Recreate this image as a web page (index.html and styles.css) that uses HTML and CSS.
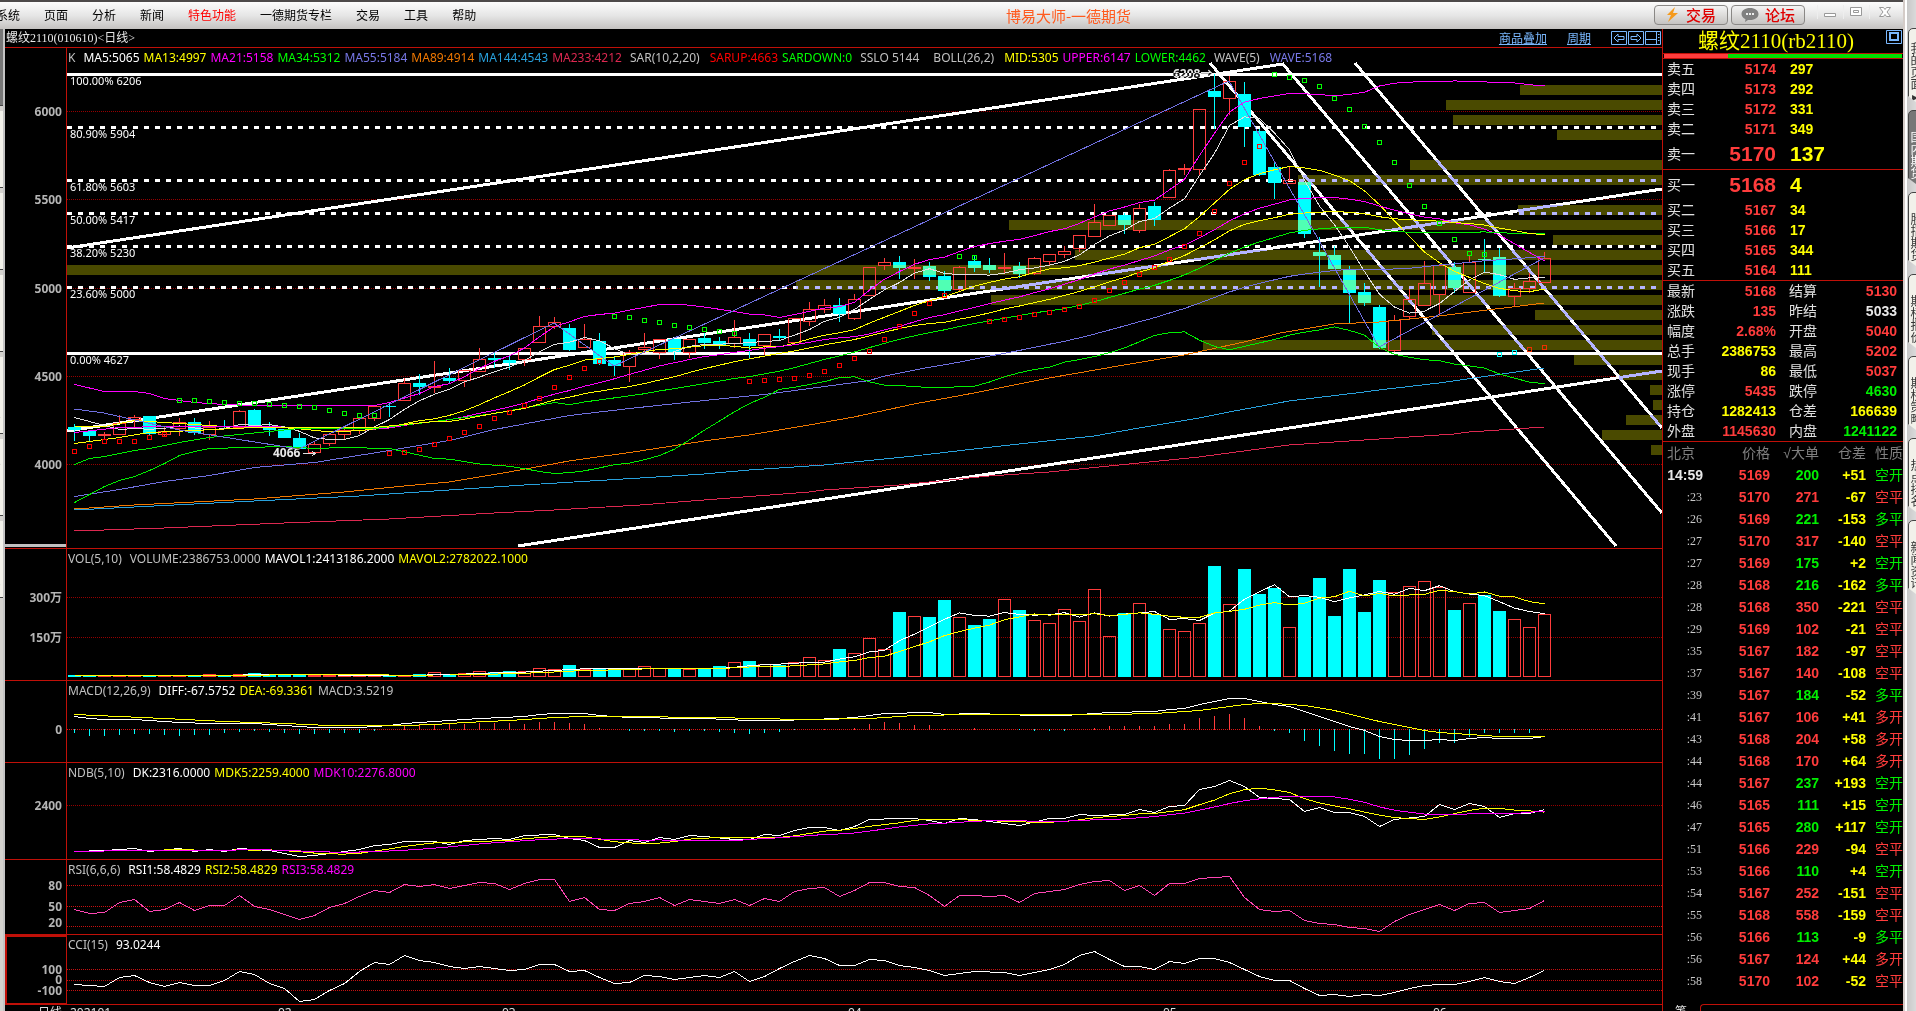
FILE: index.html
```html
<!DOCTYPE html>
<html lang="zh-CN">
<head>
<meta charset="utf-8">
<title>博易大师-一德期货</title>
<link rel="stylesheet" href="styles.css">
</head>
<body>
<div class="app">
  <header class="menubar">
    <nav class="menu">
      <a href="#">系统</a><a href="#">页面</a><a href="#">分析</a><a href="#">新闻</a><a href="#" class="hot">特色功能</a><a href="#">一德期货专栏</a><a href="#">交易</a><a href="#">工具</a><a href="#">帮助</a>
    </nav>
    <h1 class="app-title">博易大师-一德期货</h1>
    <div class="actions">
      <button class="action" type="button">
        <svg width="14" height="15" viewBox="0 0 14 15"><path d="M9 0 1 8h4l-3 7 10-9H7z" fill="#f59a1c"/></svg>交易
      </button>
      <button class="action" type="button">
        <svg width="18" height="14" viewBox="0 0 18 14"><path d="M9 0c5 0 8.500 2.500 8.500 6S14 12 9 12l-2 0-3 2 .5-2.800C2 10 .5 8.200.5 6 .5 2.500 4 0 9 0z" fill="#808080"/><path d="M5 5h2v2H5zM8 5h2v2H8zM11 5h2v2h-2z" fill="#eee"/></svg>论坛
      </button>
      <div class="win">
        <button type="button" aria-label="最小化"><svg width="13" height="12" viewBox="0 0 13 12"><path d="M.5 7.500h11v3H.5z" fill="#fff" stroke="#999"/></svg></button>
        <button type="button" aria-label="还原"><svg width="13" height="12" viewBox="0 0 13 12"><path d="M.5 1.500h11v8H.5zM3.500 4.500h5v2h-5z" fill="#fff" stroke="#999"/></svg></button>
        <button type="button" aria-label="关闭"><svg width="13" height="12" viewBox="0 0 13 12"><path d="M.5 1.500h4L6 3.500l1.500-2h4L8 6l3.500 4.500h-4L6 8.500l-1.500 2h-4L4 6z" fill="#fff" stroke="#999"/></svg></button>
      </div>
    </div>
  </header>

  <div class="body">
    <aside class="tabs left" id="leftTabs" aria-label="左侧标签"></aside>

    <main class="charts">
      <div class="chart-head">
        <h2>螺纹2110(010610)&lt;日线&gt;</h2>
        <div class="tools">
          <a href="#">商品叠加</a><a href="#">周期</a>
          <svg class="icons" width="50" height="14" viewBox="0 0 50 14" fill="none" stroke="#7ab8ff">
            <path d="M.5.500h15v13H.5zM17.500.500h15v13h-15zM34.500.500h15v13h-15z"/>
            <path d="M3 7l4-4v2.500h6v3H7V11zM30 7l-4-4v2.500h-6v3h6V11z"/>
            <path d="M34.500 8.500h11M45.500.500v13M47 3.500h1.500M47 6.500h1.500M47 9.500h1.500"/>
          </svg>
        </div>
      </div>

      <section class="pane price">
        <div class="axis" data-ticks="6000 111,5500 199,5000 288,4500 376,4000 464" data-top="48" data-height="500"></div>
        <div class="plot">
          <svg id="price" viewBox="67 48 1595 500" preserveAspectRatio="none"></svg>
          <div class="fibs" id="fibs"></div>
          <p class="legend">
            <span>K</span><span class="white gap">MA5:5065</span><span class="yellow">MA13:4997</span><span class="magenta">MA21:5158</span><span class="green">MA34:5312</span><span class="indigo">MA55:5184</span><span class="orange">MA89:4914</span><span class="sky">MA144:4543</span><span class="rose">MA233:4212</span><span class="gap fn">SAR(10,2,20)</span><span class="pure-red">SARUP:4663</span><span class="green">SARDOWN:0</span><span class="gap fn">SSLO 5144</span><span class="gap fn">BOLL(26,2)</span><span class="yellow">MID:5305</span><span class="magenta">UPPER:6147</span><span class="green">LOWER:4462</span><span class="gap fn">WAVE(5)</span><span class="indigo">WAVE:5168</span>
          </p>
        </div>
      </section>

      <section class="pane volume">
        <div class="axis" data-ticks="300万 597,150万 637" data-top="549" data-height="131"></div>
        <div class="plot">
          <svg id="volume" viewBox="67 549 1595 131" preserveAspectRatio="none"></svg>
          <p class="legend"><span class="fn">VOL(5,10)</span><span>VOLUME:2386753.0000</span><span class="white">MAVOL1:2413186.2000</span><span class="yellow">MAVOL2:2782022.1000</span></p>
        </div>
      </section>

      <section class="pane macd">
        <div class="axis" data-ticks="0 729" data-top="681" data-height="81"></div>
        <div class="plot">
          <svg id="macd" viewBox="67 681 1595 81" preserveAspectRatio="none"></svg>
          <p class="legend"><span class="fn">MACD(12,26,9)</span><span class="white">DIFF:-67.5752</span><span class="yellow">DEA:-69.3361</span><span>MACD:3.5219</span></p>
        </div>
      </section>

      <section class="pane ndb">
        <div class="axis" data-ticks="2400 805" data-top="763" data-height="96"></div>
        <div class="plot">
          <svg id="ndb" viewBox="67 763 1595 96" preserveAspectRatio="none"></svg>
          <p class="legend"><span class="fn">NDB(5,10)</span><span class="white">DK:2316.0000</span><span class="yellow">MDK5:2259.4000</span><span class="magenta">MDK10:2276.8000</span></p>
        </div>
      </section>

      <section class="pane rsi">
        <div class="axis" data-ticks="80 885,50 906,20 922" data-top="860" data-height="74"></div>
        <div class="plot">
          <svg id="rsi" viewBox="67 860 1595 74" preserveAspectRatio="none"></svg>
          <p class="legend"><span class="fn">RSI(6,6,6)</span><span class="white">RSI1:58.4829</span><span class="yellow">RSI2:58.4829</span><span class="magenta">RSI3:58.4829</span></p>
        </div>
      </section>

      <section class="pane cci">
        <div class="axis selected" data-ticks="100 968,0 979,-100 990" data-top="935" data-height="69"></div>
        <div class="plot">
          <svg id="cci" viewBox="67 935 1595 69" preserveAspectRatio="none"></svg>
          <p class="legend"><span class="fn">CCI(15)</span><span class="white">93.0244</span></p>
        </div>
      </section>

      <footer class="timeline">
        <span class="period">日线</span>
        <div class="dates" id="dates"></div>
      </footer>
    </main>

    <aside class="quote">
      <div class="quote-head">
        <h2>螺纹2110(rb2110)</h2>
        <button type="button" aria-label="最大化"><svg width="16" height="14" viewBox="0 0 16 14" fill="none" stroke="#7ab8ff"><path d="M.5.500h15v13H.5z"/><path d="M4 3h8v7H4z" stroke-width="2"/></svg></button>
      </div>
      <div class="ratio"><span class="buy"></span></div>

      <table class="book">
        <tr><th>卖五</th><td>5174</td><td class="yellow">297</td></tr>
        <tr><th>卖四</th><td>5173</td><td class="yellow">292</td></tr>
        <tr><th>卖三</th><td>5172</td><td class="yellow">331</td></tr>
        <tr><th>卖二</th><td>5171</td><td class="yellow">349</td></tr>
        <tr class="best"><th>卖一</th><td>5170</td><td class="yellow">137</td></tr>
      </table>
      <table class="book">
        <tr class="best"><th>买一</th><td>5168</td><td class="yellow">4</td></tr>
        <tr><th>买二</th><td>5167</td><td class="yellow">34</td></tr>
        <tr><th>买三</th><td>5166</td><td class="yellow">17</td></tr>
        <tr><th>买四</th><td>5165</td><td class="yellow">344</td></tr>
        <tr><th>买五</th><td>5164</td><td class="yellow">111</td></tr>
      </table>
      <table class="stats">
        <tr><th>最新</th><td class="red">5168</td><th>结算</th><td class="red">5130</td></tr>
        <tr><th>涨跌</th><td class="red">135</td><th>昨结</th><td class="pale">5033</td></tr>
        <tr><th>幅度</th><td class="red">2.68%</td><th>开盘</th><td class="red">5040</td></tr>
        <tr><th>总手</th><td class="yellow">2386753</td><th>最高</th><td class="red">5202</td></tr>
        <tr><th>现手</th><td class="yellow">86</td><th>最低</th><td class="red">5037</td></tr>
        <tr><th>涨停</th><td class="red">5435</td><th>跌停</th><td class="lime">4630</td></tr>
        <tr><th>持仓</th><td class="yellow">1282413</td><th>仓差</th><td class="yellow">166639</td></tr>
        <tr><th>外盘</th><td class="red">1145630</td><th>内盘</th><td class="lime">1241122</td></tr>
      </table>
      <table class="trades">
        <thead><tr><th>北京</th><th>价格</th><th>√大单</th><th>仓差</th><th>性质</th></tr></thead>
        <tbody id="trades"></tbody>
      </table>
      <div class="quote-tabs"><span>笔</span><div class="quote-tab"></div></div>
    </aside>
  </div>
</div>
<aside class="edge">
  <div class="tabs right" id="rightTabs" aria-label="右侧标签"></div>
</aside>
<script src="chart.js"></script>
</body>
</html>
```
FILE: styles.css
```css
* { box-sizing: border-box; }

body {
  margin: 0;
  height: 100vh;
  display: flex;
  overflow: hidden;
  background: #000;
  color: #c0c0c0;
  font: 12px/20px "Noto Sans", "Noto Sans CJK SC", sans-serif;
}

h1, h2, p { margin: 0; font-weight: 400; }
button { padding: 0; border: 0; background: none; font: inherit; }
svg { display: block; }

.app { flex: 1; min-width: 0; display: flex; flex-direction: column; }

/* menu bar */
.menubar {
  position: relative;
  flex: none;
  height: 29px;
  display: flex;
  justify-content: space-between;
  align-items: center;
  border-top: 2px solid #4d4a4a;
  background: linear-gradient(#fcfcfc, #e6e6e6 50%, #c4c2c0);
}
.menu { display: flex; gap: 24px; margin-left: -4px; padding-bottom: 2px; }
.menu a { color: #000; text-decoration: none; white-space: nowrap; font-family: "Noto Sans CJK SC", sans-serif; }
.menu a.hot { color: #f00; }
.app-title {
  position: absolute;
  left: 0;
  right: 0;
  padding-left: 234px;
  text-align: center;
  pointer-events: none;
  color: #ff5a1e;
  font: 15px/24px "Noto Sans CJK SC", sans-serif;
}
.actions { display: flex; align-items: center; gap: 3px; padding: 0 3px 2px 0; }
.action {
  width: 74px;
  height: 20px;
  display: flex;
  align-items: center;
  justify-content: center;
  gap: 6px;
  border: 1px solid #8a8886;
  border-radius: 4px;
  background: linear-gradient(#f4f4f4, #c6c4c2);
  color: #e00000;
  font: 500 15px/18px "Noto Sans CJK SC", sans-serif;
}
.win { display: flex; align-self: flex-start; height: 18px; padding-left: 9px; }
.win button { width: 26px; height: 14px; display: flex; align-items: center; justify-content: center; border-left: 1px solid #eee; }
.win button:last-child { width: 31px; }

/* workspace */
.body { flex: 1; min-height: 0; display: flex; }

.tabs { display: flex; flex-direction: column; gap: 5px; overflow: hidden; font: 12px/13px "Noto Sans CJK SC", sans-serif; }
.tab {
  flex: none;
  height: 77px;
  border: 1px solid #444;
  color: #333;
  background: #f2f1ea;
  writing-mode: vertical-rl;
}
.tab.active { background: #777; color: #fff; }
.tabs.left { flex: none; width: 5px; background: #d4d2ce; border-right: 2px solid #c4c4c4; align-items: flex-end; }
.tabs.left .tab { width: 17px; padding-top: 8px; border: 0; border-bottom: 1px solid #444; }
.tabs.left .tab.active { background: #777; }

.edge {
  flex: none;
  width: 13px;
  display: flex;
  flex-direction: column;
  padding-top: 28px;
  overflow: hidden;
  border-left: 2px solid #d4ccc8;
  background: linear-gradient(90deg, #fff 2px, #c8c8c8 2px, #dadada);
}
.tabs.right { padding-left: 3px; }
.tabs.right .tab { width: 18px; padding: 12px 2px 0; border-radius: 5px 0 0 0; clip-path: polygon(0 0, 100% 0, 100% 100%, 12px 100%, 0 68px); }

/* charts */
.charts { flex: 1; min-width: 0; display: flex; flex-direction: column; }
.chart-head {
  flex: none;
  height: 19px;
  display: flex;
  align-items: center;
  justify-content: space-between;
  padding: 0 1px;
  border-bottom: 1px solid #c01008;
}
.chart-head h2 { color: #e8e8e8; font: 12px/18px "Liberation Serif", "Noto Sans CJK SC", serif; }
.tools { display: flex; align-items: center; gap: 20px; }
.tools a { color: #7ab8ff; font: 12px/18px "Noto Sans CJK SC", sans-serif; }

.pane { min-height: 0; display: flex; border-bottom: 1px solid #c01008; }
.price { flex: 500 1 0; }
.volume { flex: 131 1 0; }
.macd { flex: 81 1 0; }
.ndb { flex: 96 1 0; }
.rsi { flex: 74 1 0; }
.cci { flex: 69 1 0; }

.axis { position: relative; flex: none; width: 62px; border-right: 1px solid #c01008; }
.axis span { position: absolute; right: 4px; margin-top: -5px; color: #b4b4b4; font-weight: 700; line-height: 11px; }
.price .axis::after { content: ""; position: absolute; left: 0; right: 0; bottom: 1px; height: 3px; background: #c0c0c0; }
.axis.selected { border: 2px solid #c01008; border-width: 2px 1px 1px 2px; }

.plot { position: relative; flex: 1; min-width: 0; }
.plot > svg { position: absolute; inset: 0; width: 100%; height: 100%; shape-rendering: crispEdges; }
.legend { position: absolute; top: 0; left: 1px; display: flex; gap: 4px; white-space: nowrap; }
.legend .gap { margin-left: 4px; }
.legend .fn { padding-right: 4px; }
.price .legend .fn { padding-right: 6px; }
.fibs span { position: absolute; left: 3px; margin-top: -3px; color: #fff; font-size: 11px; white-space: nowrap; }
.fibs .extreme { left: auto; margin-top: -10px; font-size: 12px; font-weight: 700; color: #e8e8e8; mix-blend-mode: difference; }

.blend { mix-blend-mode: difference; }

.timeline { flex: 0 0 6px; display: flex; overflow: hidden; color: #e0e0e0; line-height: 16px; }
.period { flex: none; width: 62px; padding-right: 5px; text-align: right; }
.dates { position: relative; flex: 1; }
.dates span { position: absolute; top: 0; }

/* quote panel */
.quote {
  flex: none;
  width: 241px;
  display: flex;
  flex-direction: column;
  overflow: hidden;
  border-left: 1px solid #c01008;
  font: 14px/20px "Liberation Sans", "Noto Sans CJK SC", sans-serif;
}
.quote-head { position: relative; flex: none; height: 24px; display: flex; align-items: center; justify-content: center; }
.quote-head h2 { padding-right: 14px; color: #ff0; font: 21px/24px "Liberation Serif", "Noto Sans CJK SC", serif; }
.quote-head button { position: absolute; right: 1px; top: 1px; }
.ratio { flex: none; height: 6px; padding: 0 1px; border: solid #c01008; border-width: 1px 0; background: #00e000 content-box; }
.ratio .buy { display: block; width: 27%; height: 100%; background: #ff3c3c; }

.quote table { flex: none; width: 100%; table-layout: fixed; border-collapse: separate; border-spacing: 0; }
.quote th, .quote td { height: 20px; padding: 0; line-height: 18px; white-space: nowrap; }
.quote th { color: #e0e0e0; font-weight: 400; text-align: left; }
.quote td { font-weight: 700; text-align: right; }

.book, .stats { border-bottom: 1px solid #c01008; }
.quote .book th, .quote .stats th:first-child { width: 36px; padding-left: 4px; }
.book td:nth-child(2) { width: 77px; color: #ff3c3c; }
.quote .book td:last-child { padding-left: 14px; text-align: left; }
.quote .best th, .quote .best td { height: 30px; }
.book .best td { font-size: 21px; }
.stats td:nth-child(2) { width: 77px; }
.quote .stats th:nth-child(3) { width: 50px; padding-left: 13px; }
.quote .stats td:last-child { padding-right: 6px; }

.quote .trades th:nth-child(1) { width: 40px; padding-left: 4px; text-align: left; }
.trades th:nth-child(2) { width: 67px; }
.trades th:nth-child(3) { width: 49px; }
.trades th:nth-child(4) { width: 47px; }
.quote .trades th, .quote .trades td { height: 22px; }
.quote .trades th { color: #808080; text-align: right; }
.quote .trades .sec { padding-right: 1px; color: #c8c8c8; font: 12px/18px "Liberation Serif", serif; }
.quote .trades .kind { font-weight: 400; }

.quote-tabs { display: flex; flex: none; height: 19px; margin-top: 12px; color: #e0e0e0; font-size: 12px; line-height: 16px; }
.quote-tabs span { width: 37px; padding-left: 12px; }
.quote-tab { flex: 1; border: 1px solid #c01008; border-width: 1px 0 0 1px; border-radius: 4px 0 0 0; }

/* shared colours */
.white { color: #fff; }
.pale { color: #e8e8e8; }
.yellow { color: #ff0; }
.magenta { color: #f0f; }
.green { color: #0f0; }
.lime { color: #00f000; }
.indigo { color: #7878e8; }
.orange { color: #f07800; }
.sky { color: #28a0dc; }
.rose { color: #dc2850; }
.red { color: #ff3c3c; }
.pure-red { color: #f00; }
```
FILE: chart.js
```js
const SVG = 'http://www.w3.org/2000/svg';
const X0 = 74, STEP = 15, COUNT = 99, LEFT = 67, RIGHT = 1662;
const xAt = i => X0 + STEP * i;

function add(parent, name, attrs) {
  const el = document.createElementNS(SVG, name);
  for (const key in attrs) el.setAttribute(key, attrs[key]);
  parent.appendChild(el);
  return el;
}
const rect = (p, x, y, w, h, fill) => add(p, 'rect', { x, y, width: w, height: h, fill });
const line = (p, x1, y1, x2, y2, stroke, width = 1, dash) =>
  add(p, 'line', Object.assign({ x1, y1, x2, y2, stroke, 'stroke-width': width }, dash ? { 'stroke-dasharray': dash } : {}));
const path = (p, pts, stroke) =>
  add(p, 'polyline', { points: pts.map(q => q.join(',')).join(' '), fill: 'none', stroke, 'stroke-width': 1 });
const grid = (p, ys, color) => ys.forEach(y => line(p, LEFT, y + 0.5, RIGHT, y + 0.5, color, 1, '1 1'));

// "index value index value ..." with straight segments in between
function series(text) {
  const n = text.trim().split(/\s+/).map(Number), out = [];
  for (let k = 0; k + 3 < n.length; k += 2)
    for (let i = n[k]; i < n[k + 2]; i++)
      out[i] = n[k + 1] + (n[k + 3] - n[k + 1]) * (i - n[k]) / (n[k + 2] - n[k]);
  out[n[n.length - 2]] = n[n.length - 1];
  return out;
}
const curve = (p, values, color) => path(p, values.map((v, i) => [xAt(i) + 0.5, v + 0.5]), color);

function average(values, span, seed) {
  const head = seed ? series(seed) : [];
  return values.map((v, i) => {
    if (i < head.length) return head[i];
    const part = values.slice(Math.max(0, i - span + 1), i + 1);
    return part.reduce((a, b) => a + b, 0) / part.length;
  });
}

// kind, high, body top, body bottom, low
const candles = `c 424 427 430 441|c 431 431 436 441|r 432 434 435 440|r 415 423 434 434|r 415 417 419 427|c 416 416 434 435|r 427 431 434 437|r 418 422 428 436|c 418 422 433 435|r 421 427 434 440
c 420 426 427 428|r 410 411 427 429|c 409 410 426 427|c 422 427 430 436|c 429 429 438 438|c 433 438 449 449|r 441 444 452 454|r 433 434 443 446|r 429 430 434 439|r 417 418 430 434
r 406 406 418 421|c 402 406 407 417|r 378 383 400 400|c 374 383 387 395|r 361 386 387 393|c 368 378 381 384|r 370 370 380 387|r 348 359 371 371|c 352 358 360 368|c 355 360 363 370
r 348 348 359 366|r 316 326 342 343|r 317 322 326 329|c 324 328 350 351|r 324 339 347 347|c 333 341 364 365|c 357 360 366 376|r 350 352 366 382|r 333 347 349 353|r 339 339 352 359
c 339 339 352 360|r 339 339 352 358|c 333 338 343 349|c 337 341 345 349|r 320 337 343 348|c 333 339 346 358|r 334 334 345 355|c 329 336 338 340|r 318 318 342 342|r 302 309 321 326
r 299 305 309 313|c 298 305 314 322|r 294 299 318 320|r 267 267 295 295|r 258 262 265 270|c 256 262 268 279|r 259 267 268 279|c 262 266 277 281|c 271 276 291 297|r 266 267 289 291
c 255 261 268 272|c 258 265 270 273|r 253 267 268 273|c 262 266 274 278|r 257 258 273 275|r 254 254 261 266|r 246 251 254 258|r 235 235 248 252|r 204 222 236 237|r 215 215 225 225
c 213 215 225 234|r 204 208 230 233|c 202 206 220 226|r 169 170 197 197|r 164 168 169 175|r 109 109 169 175|c 74 91 97 129|r 76 81 98 115|c 82 94 127 147|c 129 131 175 176
c 162 167 183 199|r 167 180 183 184|c 182 182 234 238|c 237 252 256 287|c 246 255 269 269|c 266 270 293 323|c 283 292 303 306|c 305 307 348 349|r 315 320 350 352|r 289 299 316 320
r 261 283 305 305|r 265 265 294 314|c 262 267 288 293|r 255 262 292 293|c 239 259 260 272|c 248 257 296 297|r 283 288 296 306|r 273 281 288 293|r 252 258 282 282`
  .split(/[|\n]/).map(row => {
    const [kind, ...v] = row.trim().split(' ');
    const [high, top, bottom, low] = v.map(Number);
    return { down: kind === 'c', high, top, bottom, low };
  });
const closes = candles.map(c => (c.down ? c.bottom : c.top));

// start x and top y of every volume-at-price band
const bands = [[1520, 85], [1446, 100], [1453, 115], [1557, 130], [1410, 160], [1298, 175], [1518, 205], [1009, 220], [1553, 235],
  [1075, 250], [67, 265], [796, 280], [991, 295], [1535, 310], [1432, 325], [1203, 340], [1574, 355], [1619, 370], [1650, 385],
  [1653, 400], [1626, 415], [1602, 430], [1651, 445]];

const fibs = [['100.00% 6206', 74], ['80.90% 5904', 127], ['61.80% 5603', 180], ['50.00% 5417', 213], ['38.20% 5230', 246],
  ['23.60% 5000', 287], ['0.00% 4627', 353]];

function drawPrice() {
  const svg = document.getElementById('price');
  grid(svg, [111, 199, 288, 376, 464], '#960000');
  fibs.forEach(([, y], i) => line(svg, LEFT, y + 0.5, RIGHT, y + 0.5, '#fff', 3, i === 0 || i === 6 ? '' : '5 6'));
  [[67, 248, 1283, 64], [67, 431, 1662, 189], [518, 546, 1662, 371], [1210, 63, 1616, 546], [1282, 63, 1662, 513], [1355, 63, 1662, 428]]
    .forEach(t => line(svg, ...t, '#fff', 3));
  bands.forEach(([x, y]) => rect(svg, x, y, RIGHT - x, 10, '#4a4a00').setAttribute('class', 'blend'));

  candles.forEach((c, i) => {
    const x = xAt(i), color = c.down ? '#0ff' : '#ff3c3c';
    const h = Math.max(1, c.bottom - c.top);
    if (c.down) {
      line(svg, x + 0.5, c.high, x + 0.5, c.low, color);
      rect(svg, x - 6, c.top, 13, h, color);
      bands.forEach(([bx, by]) => {
        const top = Math.max(by, c.top), end = Math.min(by + 10, c.bottom);
        if (x > bx && end > top) rect(svg, x - 6, top, 13, end - top, '#50ffb4');
      });
    } else {
      line(svg, x + 0.5, c.high, x + 0.5, c.top, color);
      line(svg, x + 0.5, c.bottom, x + 0.5, c.low, color);
      add(svg, 'rect', { x: x - 5.5, y: c.top + 0.5, width: 12, height: h, fill: 'none', stroke: color });
    }
  });

  const mid = average(closes, 26, '0 443 3 437 5 432 8 430 12 427 20 427 24 421');
  const sigma = i => {
    const part = closes.slice(i - 25, i + 1), m = mid[i];
    return Math.sqrt(part.reduce((a, b) => a + (b - m) * (b - m), 0) / 25);
  };
  const upHead = series('0 384 2 391 4 391 5 393 6 398 8 402 10 404 12 405 20 405 21 402 23 393 24 386');
  const lowHead = series('0 502 1 494 2 486 3 480 4 476 5 470 6 463 7 455 8 451 9 448 14 446 16 448 18 447 21 448 24 458');
  curve(svg, average(closes, 5, '0 417 1 421 2 425 3 429'), '#e0e0e0');
  curve(svg, average(closes, 13, '0 426 2 426 4 420 7 423 10 426 11 426'), '#ff0');
  curve(svg, average(closes, 21, '0 432 3 427 6 426 12 426 19 428'), '#f0f');
  curve(svg, average(closes, 34, '0 464 1 458 2 456 4 450 5 448 7 442 9 437 11 434 13 431 15 428 20 428 24 421 28 413 32 402'), '#0e0');
  curve(svg, average(closes, 55, '0 496 3 489 6 481 9 475 12 467 16 462 21 450 25 440 28 429 33 415 37 408 42 400 46 394 52 382 53 380'), '#7070e0');
  path(svg, [[74, 509], [134, 505], [254, 499], [344, 492], [404, 486], [449, 482], [509, 472], [569, 461], [640, 451], [704, 441], [749, 435], [809, 425], [854, 417], [914, 404], [974, 393], [1049, 378], [1124, 365], [1184, 355], [1244, 342], [1280, 333], [1334, 324], [1379, 322], [1439, 316], [1544, 303]], '#f07800');
  path(svg, [[74, 510], [134, 507], [254, 501], [359, 496], [434, 491], [524, 485], [640, 478], [704, 474], [749, 470], [824, 465], [854, 462], [914, 456], [974, 449], [1019, 444], [1094, 436], [1139, 428], [1199, 418], [1229, 412], [1289, 401], [1364, 392], [1379, 390], [1439, 383], [1544, 368]], '#28a0dc');
  path(svg, [[74, 531], [164, 528], [284, 523], [389, 519], [494, 513], [554, 510], [640, 505], [704, 500], [809, 492], [824, 490], [899, 485], [989, 476], [1049, 472], [1139, 463], [1199, 457], [1244, 451], [1289, 445], [1454, 434], [1469, 432], [1544, 427]], '#dc2850');
  curve(svg, mid, '#ff0');
  curve(svg, mid.map((m, i) => (i < upHead.length ? upHead[i] : m - 2 * sigma(i))), '#f0f');
  curve(svg, mid.map((m, i) => (i < lowHead.length ? lowHead[i] : m + 2 * sigma(i))), '#0e0');
  path(svg, [[74, 409], [104, 413], [179, 430], [299, 449], [554, 323], [614, 366], [1229, 81], [1379, 347], [1544, 258]], '#7070e0');

  const sar = [['#f00', 0, '451 446 441 441 441 437 434'], ['#0f0', 7, '400 400 401 402 403 403 404 405 406 407 410 413 415 415'],
    ['#f00', 21, '453 452 449 444 438 432 426 418 412 405 398 387 377 368 361'], ['#0f0', 36, '316 317 320 322 325 327 329 331 333'],
    ['#f00', 45, '381 380 379 378 375 371 365 358 351 339 326 313 303 295'], ['#0f0', 59, '256 257'],
    ['#f00', 61, '321 319 317 314 312 309 306 300 290 282 274 267 259 246 233 211 183 162 146'],
    ['#0f0', 80, '74 77 80 86 98 109 126 142 162 185 206 223 239 253 254'], ['#0ff', 95, '354 352'], ['#f03000', 97, '349 347']];
  sar.forEach(([color, start, ys]) => ys.split(' ').forEach((y, k) =>
    add(svg, 'rect', { x: xAt(start + k) - 1.5, y: y - 1.5, width: 4, height: 4, rx: 1, fill: 'none', stroke: color })));
  line(svg, 303, 453.5, 315, 453.5, '#e0e0e0');
  path(svg, [[312, 451], [315, 453.5], [312, 456]], '#e0e0e0');

  const labels = document.getElementById('fibs');
  const put = (text, x, y, cls) => {
    const s = document.createElement('span');
    s.textContent = text;
    s.style.top = (y - 48) / 5 + '%';
    if (cls) { s.className = cls; s.style.left = (x - LEFT) / 15.95 + '%'; }
    labels.appendChild(s);
  };
  fibs.forEach(([text, y]) => put(text, 0, y));
  put('6208→', 1173, 74, 'extreme');
  put('4066', 273, 453, 'extreme');
}

function drawVolume() {
  const svg = document.getElementById('volume'), base = 677;
  const tops = series('0 675 8 675 9 674 10 675 11 674 12 673 13 674 15 674 16 675 22 675 23 674 24 672 25 674 26 673 27 671 28 672 29 671 30 671 31 668 32 669 33 665 34 669 35 669 36 668 37 668 38 666 39 668 40 669 41 669 42 668 43 666 44 662 45 661 46 664 47 665 48 662 49 657 50 660 51 649 52 653 53 638 54 649 55 612 56 616 57 617 58 600 59 617 60 625 61 619 62 599 63 610 64 620 65 623 66 609 67 621 68 589 69 636 70 613 71 603 72 614 73 629 74 631 75 623 76 566 77 604 78 569 79 594 80 588 81 627 82 597 83 578 84 616 85 569 86 612 87 580 88 592 89 586 90 581 91 587 92 610 93 603 94 595 95 611 96 619 97 627 98 614');
  grid(svg, [597, 637], '#960000');
  tops.forEach((y, i) => {
    const x = xAt(i);
    if (candles[i].down) rect(svg, x - 6, y, 13, base - y, '#0ff');
    else add(svg, 'rect', { x: x - 5.5, y: y + 0.5, width: 12, height: base - y - 1, fill: 'none', stroke: '#ff3c3c' });
  });
  curve(svg, average(tops, 5), '#fff');
  curve(svg, average(tops, 10), '#ff0');
}

function drawMacd() {
  const svg = document.getElementById('macd');
  const diff = series('0 716 1 718 2 719 4 719 6 721 7 722 9 723 12 723 15 726 16 727 19 727 21 725 22 723 24 721 27 718 30 716 31 714 32 713 34 713 35 715 37 717 38 717 40 718 42 718 45 720 47 720 49 719 51 718 52 717 54 713 57 712 58 714 60 713 62 714 64 715 66 715 69 712 72 711 73 709 74 708 75 704 77 698 78 698 79 701 80 704 81 706 83 716 85 726 86 730 87 736 88 739 89 740 90 740 91 739 92 740 93 738 94 737 95 738 97 738 98 736');
  const dea = series('0 714 3 716 6 718 10 721 14 723 17 725 22 725 24 724 26 722 29 720 32 717 34 716 37 716 42 717 46 718 48 719 50 719 52 718 53 718 56 715 60 714 69 714 72 713 75 710 77 706 78 704 79 703 80 703 82 705 84 710 87 721 89 727 90 730 91 732 93 734 95 736 98 736');
  grid(svg, [729], '#e01414');
  diff.forEach((d, i) => {
    const len = Math.round(2 * (d - dea[i]));
    if (len > 0) rect(svg, xAt(i), 729, 1, len, '#0ff');
    else if (len < 0) rect(svg, xAt(i), 730 + len, 1, -len, '#ff3c3c');
  });
  curve(svg, diff, '#fff');
  curve(svg, dea, '#ff0');
}

function drawNdb() {
  const svg = document.getElementById('ndb');
  const dk = series('0 851 2 850 3 849 4 848 5 851 7 848 8 851 9 849 10 851 11 848 12 849 13 850 14 853 15 856 16 855 18 851 19 849 20 845 21 844 22 841 24 841 25 844 26 840 28 838 29 839 30 835 32 834 33 838 34 840 35 847 36 847 37 840 38 842 39 837 40 839 41 835 42 836 44 839 45 839 46 834 47 835 48 830 49 827 50 827 51 830 52 826 53 819 55 818 56 818 57 820 58 823 59 818 60 819 62 823 63 825 65 818 66 818 67 814 68 815 70 814 71 809 72 812 73 806 74 805 75 789 76 786 77 780 78 786 79 797 80 798 81 799 82 811 83 807 84 812 85 812 86 816 87 826 88 819 90 816 91 804 92 809 93 803 94 806 95 817 96 813 97 813 98 809');
  grid(svg, [805], '#960000');
  curve(svg, dk, '#fff');
  curve(svg, average(dk, 5), '#ff0');
  curve(svg, average(dk, 10), '#f0f');
}

function drawRsi() {
  const svg = document.getElementById('rsi');
  const rsi = series('0 909 1 913 2 912 3 902 4 899 5 911 6 909 7 902 8 910 9 905 10 905 11 895 12 906 13 909 14 914 15 919 16 915 17 907 18 903 19 896 20 890 21 892 22 884 23 886 24 884 25 888 26 885 27 882 28 883 29 889 30 883 31 879 32 879 33 901 34 897 35 909 36 910 37 903 38 901 39 897 40 905 41 899 42 901 43 903 44 899 45 905 46 898 47 901 48 891 49 888 50 887 51 896 52 890 53 882 54 882 55 886 56 887 57 895 58 906 59 895 60 895 61 896 62 895 63 902 64 893 65 891 66 889 67 884 68 881 69 880 70 890 71 885 72 895 73 883 74 883 75 878 76 877 77 876 78 897 79 909 80 911 81 910 82 920 83 923 84 924 85 927 86 928 87 931 88 921 89 914 90 909 91 904 92 910 93 903 94 902 95 912 96 910 97 908 98 900');
  grid(svg, [885, 906, 926], '#c81010');
  curve(svg, rsi, '#ff46b4');
}

function drawCci() {
  const svg = document.getElementById('cci');
  const cci = series('0 984 2 986 3 977 4 975 5 982 6 986 7 982 8 985 9 985 10 980 11 971 12 974 13 983 14 988 15 1001 16 999 17 990 18 983 19 971 20 962 21 964 22 955 23 960 24 962 25 966 26 968 27 966 28 968 29 970 30 969 31 964 32 964 33 971 34 970 35 977 36 983 37 982 38 975 39 976 40 979 41 977 42 975 43 977 44 971 45 981 46 976 47 968 48 961 49 955 50 958 51 965 52 965 53 959 54 960 55 965 56 967 57 970 58 975 60 971 62 972 63 975 65 969 66 964 67 955 68 951 69 959 70 966 71 966 72 969 73 961 74 963 75 958 76 958 77 962 78 969 79 976 80 980 81 980 82 988 83 995 84 994 85 996 86 994 87 995 88 992 89 988 90 985 91 984 92 984 93 981 94 977 95 981 96 983 97 977 98 970');
  grid(svg, [969, 980, 990], '#c81010');
  curve(svg, cci, '#fff');
}

function fillAxes() {
  document.querySelectorAll('.axis').forEach(axis => {
    const { ticks, top, height } = axis.dataset;
    ticks.split(',').forEach(item => {
      const [text, y] = item.split(' '), s = document.createElement('span');
      s.textContent = text;
      s.style.top = (y - top) / height * 100 + '%';
      axis.appendChild(s);
    });
  });
  [['202101', 70], ['02', 278], ['03', 502], ['04', 848], ['05', 1163], ['06', 1433]].forEach(([text, x]) => {
    const s = document.createElement('span');
    s.textContent = text;
    s.style.left = (x - LEFT) / 15.95 + '%';
    document.getElementById('dates').appendChild(s);
  });
}

function fillTrades() {
  const rows = `14:59 5169 200 +51 空开|:23 5170 271 -67 空平|:26 5169 221 -153 多平|:27 5170 317 -140 空平|:27 5169 175 +2 空开|:28 5168 216 -162 多平|:28 5168 350 -221 空平|:29 5169 102 -21 空平|:35 5167 182 -97 空平|:37 5167 140 -108 空平|:39 5167 184 -52 多平|:41 5167 106 +41 多开|:43 5168 204 +58 多开|:44 5168 170 +64 多开|:44 5167 237 +193 空开|:46 5165 111 +15 空开|:47 5165 280 +117 空开|:51 5166 229 -94 空平|:53 5166 110 +4 空开|:54 5167 252 -151 空平|:55 5168 558 -159 空平|:56 5166 113 -9 多平|:56 5167 124 +44 多开|:58 5170 102 -52 空平`;
  document.getElementById('trades').innerHTML = rows.split('|').map(row => {
    const [time, price, lots, delta, kind] = row.split(' ');
    const side = kind === '空开' || kind === '多平' ? 'lime' : 'red';
    return `<tr><td class="${time[0] === ':' ? 'sec' : 'pale'}">${time}</td><td class="red">${price}</td><td class="${side}">${lots}</td><td class="yellow">${delta}</td><td class="kind ${side}">${kind}</td></tr>`;
  }).join('');
}

function fillTabs() {
  const names = ['我的页面▸', '国内期货', '股指期货', '期权报价', '期权策略', '热点排名', '新闻资讯'];
  const build = (id, active) => {
    document.getElementById(id).innerHTML = names
      .map((name, i) => `<button type="button" class="tab${i === active ? ' active' : ''}">${name}</button>`).join('');
  };
  build('leftTabs', 0);
  build('rightTabs', 1);
}

drawPrice();
drawVolume();
drawMacd();
drawNdb();
drawRsi();
drawCci();
fillAxes();
fillTrades();
fillTabs();
```
